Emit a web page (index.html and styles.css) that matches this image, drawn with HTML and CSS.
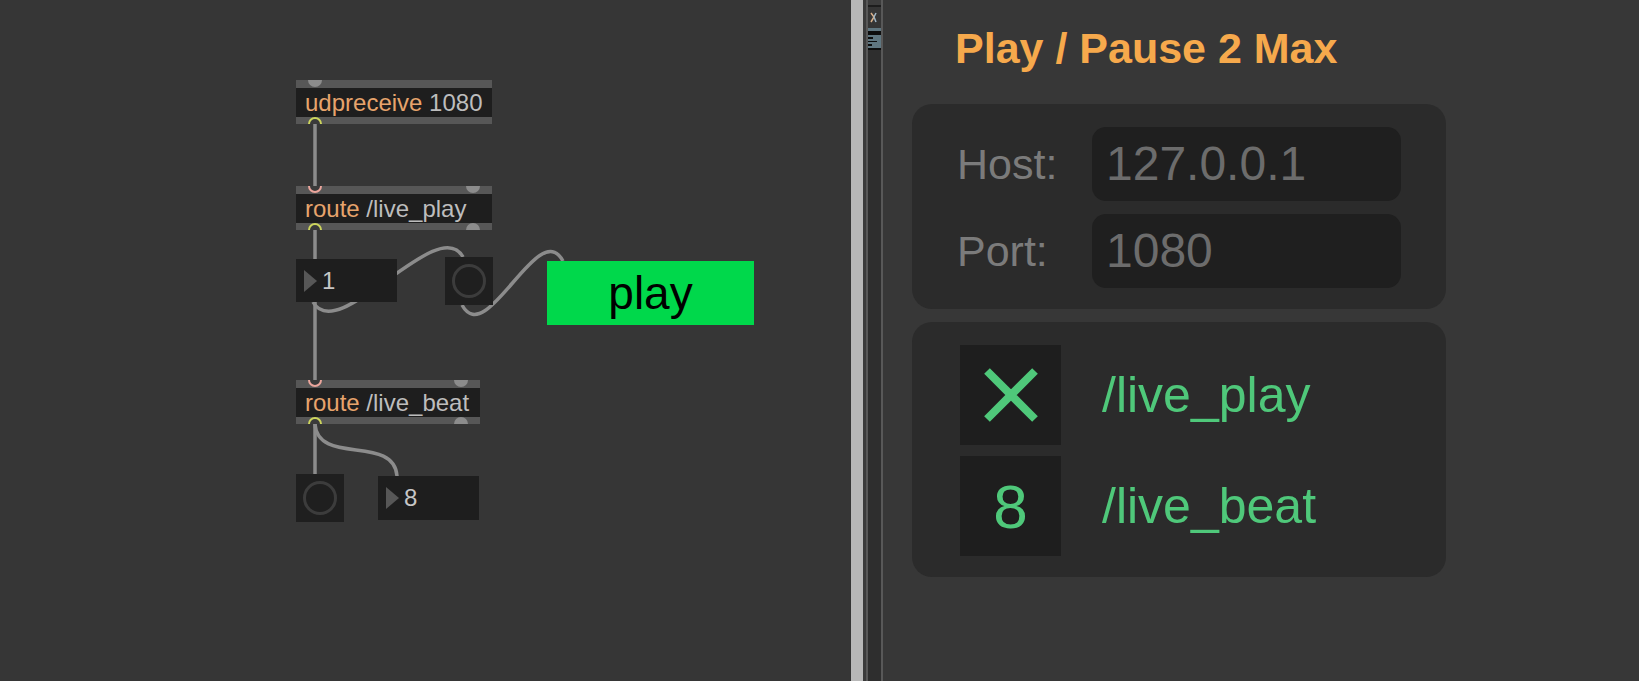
FILE: index.html
```html
<!DOCTYPE html>
<html>
<head>
<meta charset="utf-8">
<title>Play / Pause 2 Max</title>
<link rel="stylesheet" href="styles.css">
</head>
<body>
<div class="app">
  <div class="patcher">
    <svg class="cords" width="851" height="681" viewBox="0 0 851 681">
      <path d="M315 124 L315 186"/>
      <path d="M315 230 L315 380"/>
      <path d="M313 302 C338 347 438 212 463 257"/>
      <path d="M462 305 C487 350 538 216 563 261"/>
      <path d="M315 424 L315 474"/>
      <path d="M315 424 C318 466 394 434 397 476"/>
    </svg>

    <div class="obj box o-udp">
      <div class="strip top"><span class="port l gray"></span></div>
      <div class="text"><span class="cls">udpreceive</span> 1080</div>
      <div class="strip bottom"><span class="port l yellow"></span></div>
    </div>

    <div class="obj box o-route1">
      <div class="strip top"><span class="port l pink"></span><span class="port r gray"></span></div>
      <div class="text"><span class="cls">route</span> /live_play</div>
      <div class="strip bottom"><span class="port l yellow"></span><span class="port r gray"></span></div>
    </div>

    <div class="obj num o-num1"><span class="tri"></span><span>1</span></div>
    <div class="obj bang o-bang1"><span class="ring"></span></div>
    <div class="obj playbtn">play</div>

    <div class="obj box o-route2">
      <div class="strip top"><span class="port l pink"></span><span class="port r gray"></span></div>
      <div class="text"><span class="cls">route</span> /live_beat</div>
      <div class="strip bottom"><span class="port l yellow"></span><span class="port r gray"></span></div>
    </div>

    <div class="obj bang o-bang2"><span class="ring"></span></div>
    <div class="obj num o-num8"><span class="tri"></span><span>8</span></div>
  </div>

  <div class="divider">
    <div class="dv-scroll"></div>
    <div class="dv-gap"></div>
    <div class="dv-line"></div>
    <div class="dv-rail">
      <div class="rail-cap"></div>
      <div class="rail-sep"></div>
      <div class="rail-icon">
        <svg width="13" height="21" viewBox="0 0 13 21">
          <path d="M3 6 L6 10 L3 15" fill="none" stroke="#d9b08a" stroke-width="1.5"/>
          <path d="M6 10 L8 6 M6 10 L8 15" fill="none" stroke="#9fb6c6" stroke-width="1.5"/>
        </svg>
      </div>
      <div class="rail-thumb">
        <span class="tl w1"></span>
        <span class="tl w2"></span>
        <span class="tl w3"></span>
        <span class="tl w4"></span>
        <span class="tl w5"></span>
      </div>
      <div class="rail-rest"></div>
    </div>
    <div class="dv-line"></div>
  </div>

  <div class="panel">
    <h1 class="title">Play / Pause 2 Max</h1>
    <div class="card conn">
      <span class="lbl">Host:</span>
      <div class="field">127.0.0.1</div>
      <span class="lbl">Port:</span>
      <div class="field">1080</div>
    </div>
    <div class="card msgs">
      <div class="msg">
        <div class="val">
          <svg width="54" height="54" viewBox="0 0 54 54">
            <path d="M3 3 L51 51 M51 3 L3 51" stroke="#4fc87a" stroke-width="8" fill="none"/>
          </svg>
        </div>
        <span class="addr">/live_play</span>
      </div>
      <div class="msg">
        <div class="val">8</div>
        <span class="addr">/live_beat</span>
      </div>
    </div>
  </div>
</div>
</body>
</html>
```

FILE: styles.css
```css
html, body {
  margin: 0;
  padding: 0;
}

body {
  width: 1639px;
  height: 681px;
  overflow: hidden;
  background: #363636;
  font-family: "Liberation Sans", Arial, sans-serif;
}

.app {
  display: flex;
  height: 681px;
}

/* ---------- patcher canvas ---------- */
.patcher {
  position: relative;
  width: 851px;
  flex: none;
  background: #363636;
}

.cords {
  position: absolute;
  left: 0;
  top: 0;
}

.cords path {
  fill: none;
  stroke: #8c8c8c;
  stroke-width: 3.5;
}

.obj {
  position: absolute;
  box-sizing: border-box;
}

.box {
  display: flex;
  flex-direction: column;
}

.strip {
  position: relative;
  background: #575757;
  overflow: hidden;
}

.strip.top { height: 8px; }
.strip.bottom { height: 7px; }

.text {
  height: 29px;
  background: #1e1e1e;
  font-size: 24px;
  line-height: 29px;
  padding-left: 9px;
  color: #bdbdbd;
  white-space: nowrap;
}

.text .cls { color: #e7a46c; }

.port {
  position: absolute;
  width: 14px;
  height: 14px;
  border-radius: 50%;
  box-sizing: border-box;
}

.strip.top .port { top: -7px; }
.strip.bottom .port { bottom: -7px; }
.port.l { left: 12px; }
.port.r { right: 12px; }
.port.gray { background: #8c8c8c; }
.port.pink { background: #3a3a3a; border: 2px solid #eba59c; }
.port.yellow { background: #3a3a3a; border: 2px solid #cdd55c; }

.o-udp { left: 296px; top: 80px; width: 196px; }
.o-route1 { left: 296px; top: 186px; width: 196px; }
.o-route2 { left: 296px; top: 380px; width: 184px; }

.num {
  background: #1e1e1e;
  display: flex;
  align-items: center;
  gap: 5px;
  padding-left: 8px;
  font-size: 24px;
  color: #c6c6c6;
}

.num .tri {
  width: 0;
  height: 0;
  border-top: 11px solid transparent;
  border-bottom: 11px solid transparent;
  border-left: 13px solid #575757;
}

.o-num1 { left: 296px; top: 259px; width: 101px; height: 43px; }
.o-num8 { left: 378px; top: 476px; width: 101px; height: 44px; }

.bang {
  width: 48px;
  height: 48px;
  background: #1f1f1f;
  display: flex;
  align-items: center;
  justify-content: center;
}

.bang .ring {
  width: 34px;
  height: 34px;
  border-radius: 50%;
  border: 3px solid #3c3c3c;
  box-sizing: border-box;
}

.o-bang1 { left: 445px; top: 257px; }
.o-bang2 { left: 296px; top: 474px; }

.playbtn {
  left: 547px;
  top: 261px;
  width: 207px;
  height: 64px;
  background: #00d84b;
  color: #000;
  font-size: 46px;
  display: flex;
  align-items: center;
  justify-content: center;
}

/* ---------- divider ---------- */
.divider {
  display: flex;
  width: 32px;
  flex: none;
}

.dv-scroll { width: 12px; background: #b8b8b8; }
.dv-gap { width: 3px; background: #3b3b3b; }
.dv-line { width: 2px; background: #585858; }

.dv-rail {
  width: 13px;
  display: flex;
  flex-direction: column;
  background: #2e2e2e;
}

.rail-cap { height: 5px; background: #3c3c3c; }
.rail-sep { height: 2px; background: #1d1d1d; }
.rail-icon { height: 21px; background: #353535; }
.rail-icon svg { display: block; }

.rail-thumb {
  height: 22px;
  background: #5f7680;
  display: flex;
  flex-direction: column;
  gap: 2px;
  padding-top: 3px;
  box-sizing: border-box;
}

.tl { display: block; height: 2px; background: #0d0d0d; }
.tl.w1 { height: 4px; width: 13px; }
.tl.w2 { width: 5px; }
.tl.w3 { width: 9px; }
.tl.w4 { width: 4px; }
.tl.w5 { width: 13px; }

.rail-rest { flex: 1; }

/* ---------- right panel ---------- */
.panel {
  flex: 1;
  background: #373737;
  padding-left: 29px;
  display: flex;
  flex-direction: column;
  align-items: flex-start;
}

.title {
  margin: 23px 0 0 43px;
  height: 50px;
  font-size: 43px;
  line-height: 50px;
  font-weight: bold;
  color: #f6a94c;
}

.card {
  width: 534px;
  background: #2b2b2b;
  border-radius: 20px;
  box-sizing: border-box;
}

.conn {
  margin-top: 31px;
  padding: 23px 45px 21px;
  display: grid;
  grid-template-columns: 135px 309px;
  row-gap: 13px;
}

.lbl {
  font-size: 43px;
  line-height: 74px;
  color: #7b7b7b;
}

.field {
  height: 74px;
  border-radius: 14px;
  background: #1f1f1f;
  padding-left: 14px;
  font-size: 48px;
  line-height: 74px;
  color: #6c6c6c;
}

.msgs {
  margin-top: 13px;
  padding: 23px 0 21px 48px;
  display: flex;
  flex-direction: column;
  gap: 11px;
}

.msg {
  display: flex;
  align-items: center;
  gap: 41px;
}

.val {
  width: 101px;
  height: 100px;
  background: #1e1e1e;
  display: flex;
  align-items: center;
  justify-content: center;
  font-size: 62px;
  color: #4fc87a;
}

.val svg { display: block; }

.addr {
  font-size: 50px;
  color: #4fc87a;
}
```
